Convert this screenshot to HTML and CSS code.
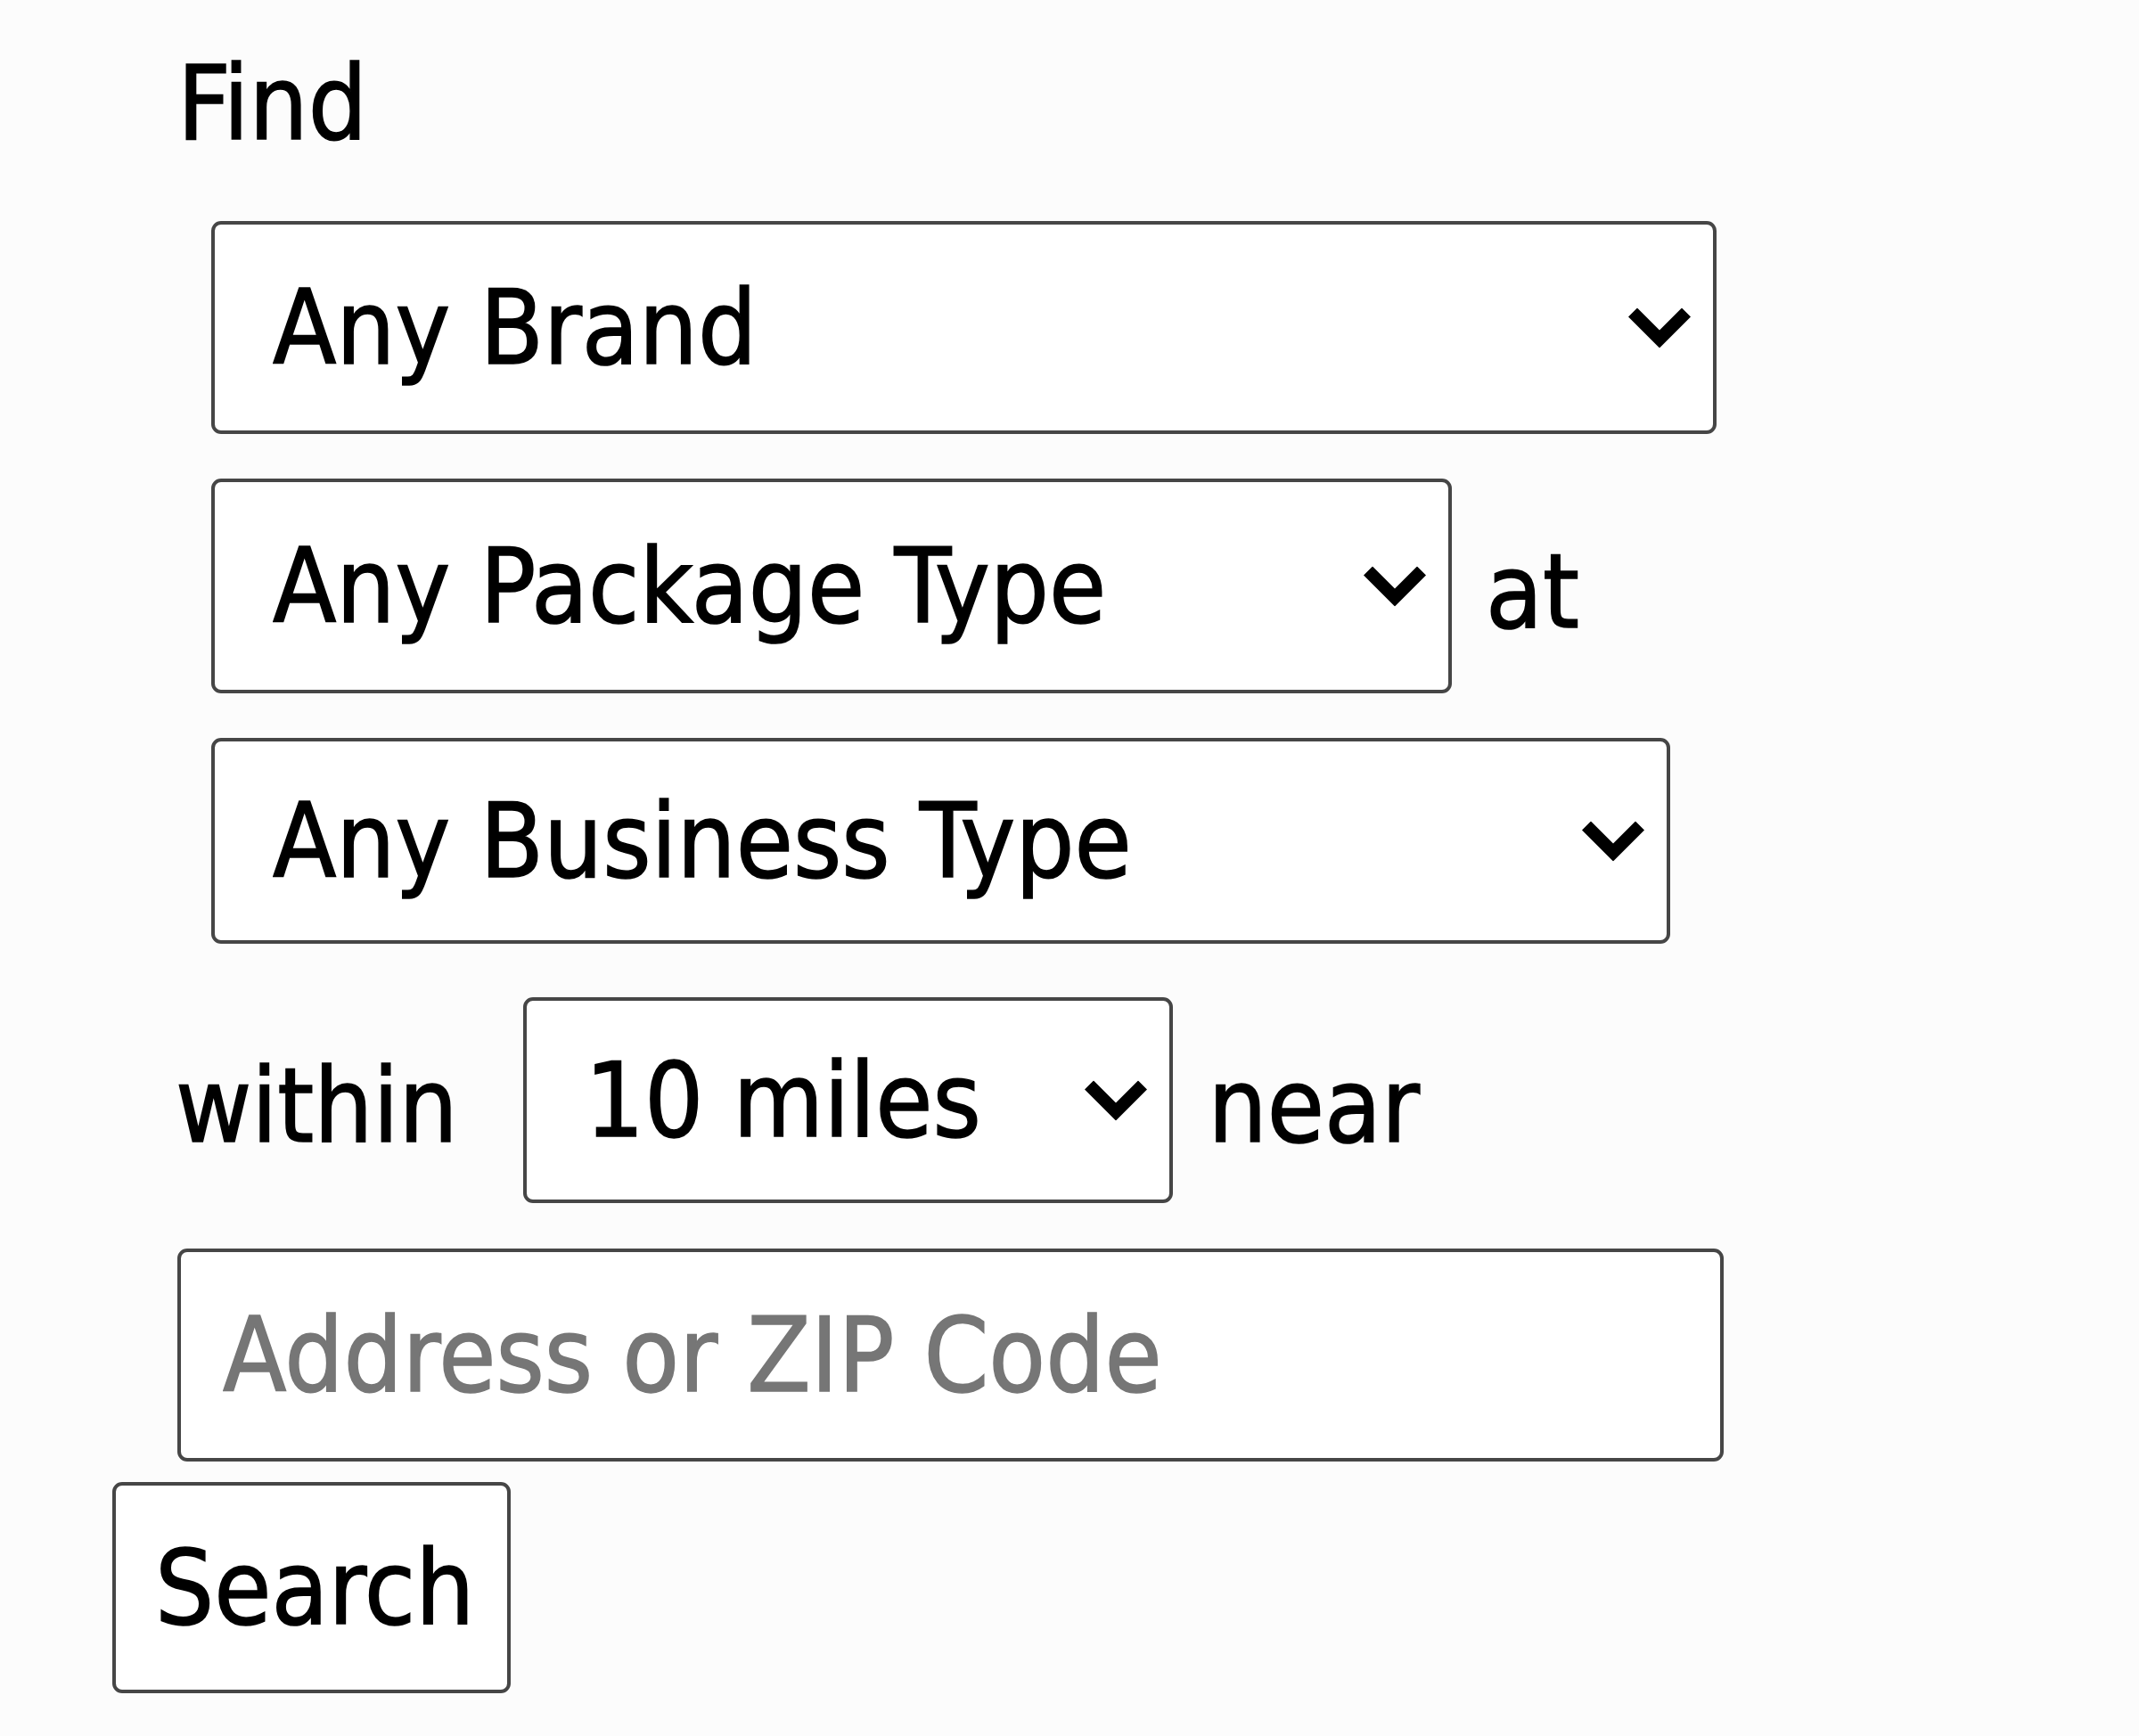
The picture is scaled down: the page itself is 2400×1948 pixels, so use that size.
FILE: index.html
```html
<!DOCTYPE html>
<html lang="en">
<head>
<meta charset="utf-8">
<title>Find</title>
<link rel="stylesheet" href="styles.css">
</head>
<body>
<form class="finder">
  <div class="find-label">Find</div>

  <div class="row row-brand">
    <div class="select-wrap w-brand">
      <select class="select"><option>Any Brand</option></select>
      <svg class="chev" viewBox="0 0 70 45" aria-hidden="true"><path d="M0 10 L10 0 L35 25 L60 0 L70 10 L35 45 Z"/></svg>
    </div>
  </div>

  <div class="row row-package">
    <div class="select-wrap w-package">
      <select class="select"><option>Any Package Type</option></select>
      <svg class="chev" viewBox="0 0 70 45" aria-hidden="true"><path d="M0 10 L10 0 L35 25 L60 0 L70 10 L35 45 Z"/></svg>
    </div>
    <span class="word word-at">at</span>
  </div>

  <div class="row row-business">
    <div class="select-wrap w-business">
      <select class="select"><option>Any Business Type</option></select>
      <svg class="chev" viewBox="0 0 70 45" aria-hidden="true"><path d="M0 10 L10 0 L35 25 L60 0 L70 10 L35 45 Z"/></svg>
    </div>
  </div>

  <div class="row row-within">
    <span class="word word-within">within</span>
    <div class="select-wrap w-miles">
      <select class="select select-miles"><option>10 miles</option></select>
      <svg class="chev" viewBox="0 0 70 45" aria-hidden="true"><path d="M0 10 L10 0 L35 25 L60 0 L70 10 L35 45 Z"/></svg>
    </div>
    <span class="word word-near">near</span>
  </div>

  <div class="row row-address">
    <input class="address" type="text" placeholder="Address or ZIP Code">
  </div>

  <div class="row row-submit">
    <button class="search" type="button">Search</button>
  </div>
</form>
</body>
</html>
```

FILE: styles.css
```css
html, body {
  margin: 0;
  padding: 0;
  background: #fcfcfc;
}

body {
  font-family: "DejaVu Sans Condensed", "DejaVu Sans", sans-serif;
  font-stretch: condensed;
  font-size: 116px;
  color: #000;
  -webkit-text-stroke: 1.5px currentColor;
}

.finder {
  display: flex;
  flex-direction: column;
  align-items: flex-start;
  padding: 48px 0 0 126px;
}

.find-label {
  margin-left: 73px;
  line-height: 135px;
  height: 135px;
}

.row {
  display: flex;
  align-items: center;
}

.row-brand { margin-top: 65px; margin-left: 111px; }
.row-package { margin-top: 50px; margin-left: 111px; }
.row-business { margin-top: 50px; margin-left: 111px; }
.row-within { margin-top: 60px; margin-left: 71px; }
.row-address { margin-top: 51px; margin-left: 73px; }
.row-submit { margin-top: 23px; }

.select-wrap {
  position: relative;
  display: flex;
}

.select {
  appearance: none;
  -webkit-appearance: none;
  box-sizing: border-box;
  width: 100%;
  margin: 0;
  border: 4px solid #464646;
  border-radius: 11px;
  background: #fff;
  color: #000;
  font: inherit;
  font-stretch: condensed;
  padding: 0 120px 0 65px;
  outline: none;
}

.w-brand { width: 1689px; }
.w-brand .select { height: 239px; }
.w-package { width: 1392px; }
.w-package .select { height: 241px; }
.w-business { width: 1637px; }
.w-business .select { height: 231px; }
.w-miles { width: 729px; }
.w-miles .select { height: 231px; }
.select-miles { padding-left: 66px; }

.chev {
  position: absolute;
  right: 29px;
  top: 50%;
  width: 70px;
  height: 45px;
  transform: translateY(-50%);
  fill: #000;
  pointer-events: none;
}

.word {
  line-height: 1;
  position: relative;
  top: 6px;
}
.word-at { margin-left: 38px; }
.word-within { margin-right: 73px; }
.word-near { margin-left: 40px; }

.address {
  box-sizing: border-box;
  width: 1735px;
  height: 239px;
  margin: 0;
  border: 4px solid #464646;
  border-radius: 11px;
  background: #fff;
  font: inherit;
  font-stretch: condensed;
  color: #000;
  padding: 0 40px 0 47px;
  outline: none;
}
.address::placeholder {
  color: #767676;
  opacity: 1;
}

.search {
  box-sizing: border-box;
  width: 447px;
  height: 237px;
  margin: 0;
  border: 4px solid #464646;
  border-radius: 11px;
  background: #fff;
  font: inherit;
  font-stretch: condensed;
  color: #000;
  padding: 0 44px;
  text-align: left;
}
```
